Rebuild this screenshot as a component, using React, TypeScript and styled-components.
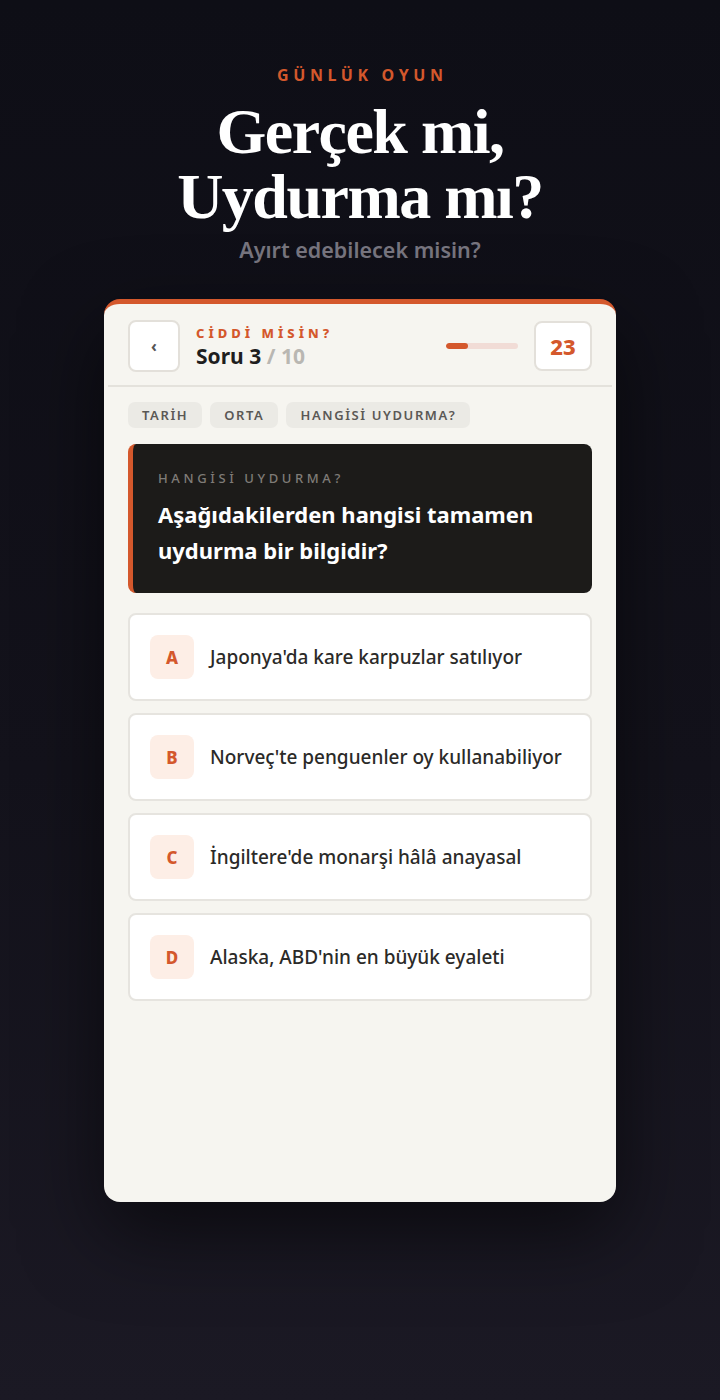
import React from "react";
import styled, { createGlobalStyle } from "styled-components";

const ORANGE = "#d4582c";

const GlobalStyle = createGlobalStyle`
  html, body {
    margin: 0;
    padding: 0;
  }
  body {
    background: linear-gradient(180deg, #0e0e16 0%, #13121b 55%, #1b1924 100%);
    min-height: 1400px;
    font-family: "Noto Sans", "Lato", sans-serif;
  }
`;

const Page = styled.div`
  min-height: 1400px;
  display: flex;
  flex-direction: column;
  align-items: center;
  padding-top: 65px;
  box-sizing: border-box;
`;

const Kicker = styled.div`
  color: ${ORANGE};
  font-size: 16px;
  font-weight: 700;
  letter-spacing: 4.6px;
  line-height: 21px;
  margin-right: -4.6px;
`;

const Title = styled.h1`
  margin: 13px 0 0;
  color: #fff;
  font-family: "Liberation Serif", "DejaVu Serif", serif;
  font-weight: 700;
  font-size: 64px;
  line-height: 65px;
  letter-spacing: -1.5px;
  text-align: center;
`;

const Subtitle = styled.div`
  margin-top: 7px;
  color: #77757f;
  font-size: 21.5px;
  font-weight: 600;
  line-height: 27px;
`;

const Card = styled.div`
  margin-top: 36px;
  width: 512px;
  height: 903px;
  box-sizing: border-box;
  background: #f6f5f0;
  border-radius: 16px;
  border-top: 5px solid ${ORANGE};
  box-shadow: 0 30px 80px rgba(0, 0, 0, 0.55);
  display: flex;
  flex-direction: column;
`;

const Header = styled.div`
  display: flex;
  align-items: center;
  padding: 16px 20px 13px;
  margin: 0 4px;
  border-bottom: 2px solid #e4e2dc;
`;

const BackButton = styled.div`
  width: 52px;
  height: 52px;
  box-sizing: border-box;
  border: 2px solid #e3e0da;
  border-radius: 8px;
  background: #fff;
  display: flex;
  align-items: center;
  justify-content: center;
  color: #555;
  font-size: 16px;
  font-weight: 700;
`;

const HeadText = styled.div`
  margin-left: 16px;
  flex: 1;
  display: flex;
  flex-direction: column;
`;

const HeadLabel = styled.div`
  color: ${ORANGE};
  font-size: 13px;
  font-weight: 800;
  letter-spacing: 4px;
  line-height: 18px;
`;

const HeadCount = styled.div`
  margin-top: 1px;
  color: #1e1e1e;
  font-size: 21px;
  font-weight: 700;
  line-height: 26px;
`;

const Muted = styled.span`
  color: #b9b7b2;
`;

const Track = styled.div`
  width: 72px;
  height: 6px;
  border-radius: 3px;
  background: #f1dcd6;
  margin-right: 16px;
  overflow: hidden;
`;

const Fill = styled.div`
  height: 100%;
  border-radius: 3px;
  background: ${ORANGE};
`;

const Score = styled.div`
  width: 58px;
  height: 50px;
  box-sizing: border-box;
  border: 2px solid #e3e0da;
  border-radius: 8px;
  background: #fff;
  display: flex;
  align-items: center;
  justify-content: center;
  color: ${ORANGE};
  font-size: 22px;
  font-weight: 800;
`;

const Body = styled.div`
  padding: 15px 24px 16px;
  display: flex;
  flex-direction: column;
`;

const Tags = styled.div`
  display: flex;
  gap: 8px;
`;

const Tag = styled.span`
  height: 26px;
  padding: 0 14px;
  border-radius: 7px;
  background: #ebeae5;
  color: #5a5855;
  font-size: 13px;
  font-weight: 600;
  letter-spacing: 1.6px;
  display: flex;
  align-items: center;
`;

const Question = styled.div`
  margin-top: 16px;
  background: #1c1b19;
  border-left: 5px solid ${ORANGE};
  border-radius: 8px;
  padding: 24px 24px 25px 25px;
`;

const QLabel = styled.div`
  color: #7f7c77;
  font-size: 13px;
  font-weight: 500;
  letter-spacing: 3.6px;
  line-height: 20px;
`;

const QText = styled.div`
  margin-top: 8px;
  color: #fff;
  font-size: 22px;
  font-weight: 700;
  line-height: 36px;
`;

const Options = styled.div`
  margin-top: 20px;
  display: flex;
  flex-direction: column;
  gap: 12px;
`;

const Option = styled.div`
  height: 88px;
  box-sizing: border-box;
  background: #fff;
  border: 2px solid #e6e4df;
  border-radius: 8px;
  padding: 0 20px;
  display: flex;
  align-items: center;
  gap: 16px;
`;

const Letter = styled.div`
  width: 44px;
  height: 44px;
  border-radius: 8px;
  background: #fdeee6;
  color: ${ORANGE};
  font-size: 17px;
  font-weight: 800;
  display: flex;
  align-items: center;
  justify-content: center;
`;

const OptionText = styled.div`
  color: #2b2a28;
  font-size: 19px;
  font-weight: 500;
`;

const options = [
  { key: "A", text: "Japonya'da kare karpuzlar satılıyor" },
  { key: "B", text: "Norveç'te penguenler oy kullanabiliyor" },
  { key: "C", text: "İngiltere'de monarşi hâlâ anayasal" },
  { key: "D", text: "Alaska, ABD'nin en büyük eyaleti" },
];

export default function App() {
  const current = 3;
  const total = 10;

  return (
    <>
      <GlobalStyle />
      <Page>
        <Kicker>GÜNLÜK OYUN</Kicker>
        <Title>
          Gerçek mi,
          <br />
          Uydurma mı?
        </Title>
        <Subtitle>Ayırt edebilecek misin?</Subtitle>

        <Card>
          <Header>
            <BackButton>‹</BackButton>
            <HeadText>
              <HeadLabel>CİDDİ MİSİN?</HeadLabel>
              <HeadCount>
                Soru {current} <Muted>/ {total}</Muted>
              </HeadCount>
            </HeadText>
            <Track>
              <Fill style={{ width: `${(current / total) * 100}%` }} />
            </Track>
            <Score>23</Score>
          </Header>

          <Body>
            <Tags>
              <Tag>TARİH</Tag>
              <Tag>ORTA</Tag>
              <Tag>HANGİSİ UYDURMA?</Tag>
            </Tags>

            <Question>
              <QLabel>HANGİSİ UYDURMA?</QLabel>
              <QText>
                Aşağıdakilerden hangisi tamamen uydurma bir bilgidir?
              </QText>
            </Question>

            <Options>
              {options.map((o) => (
                <Option key={o.key}>
                  <Letter>{o.key}</Letter>
                  <OptionText>{o.text}</OptionText>
                </Option>
              ))}
            </Options>
          </Body>
        </Card>
      </Page>
    </>
  );
}
